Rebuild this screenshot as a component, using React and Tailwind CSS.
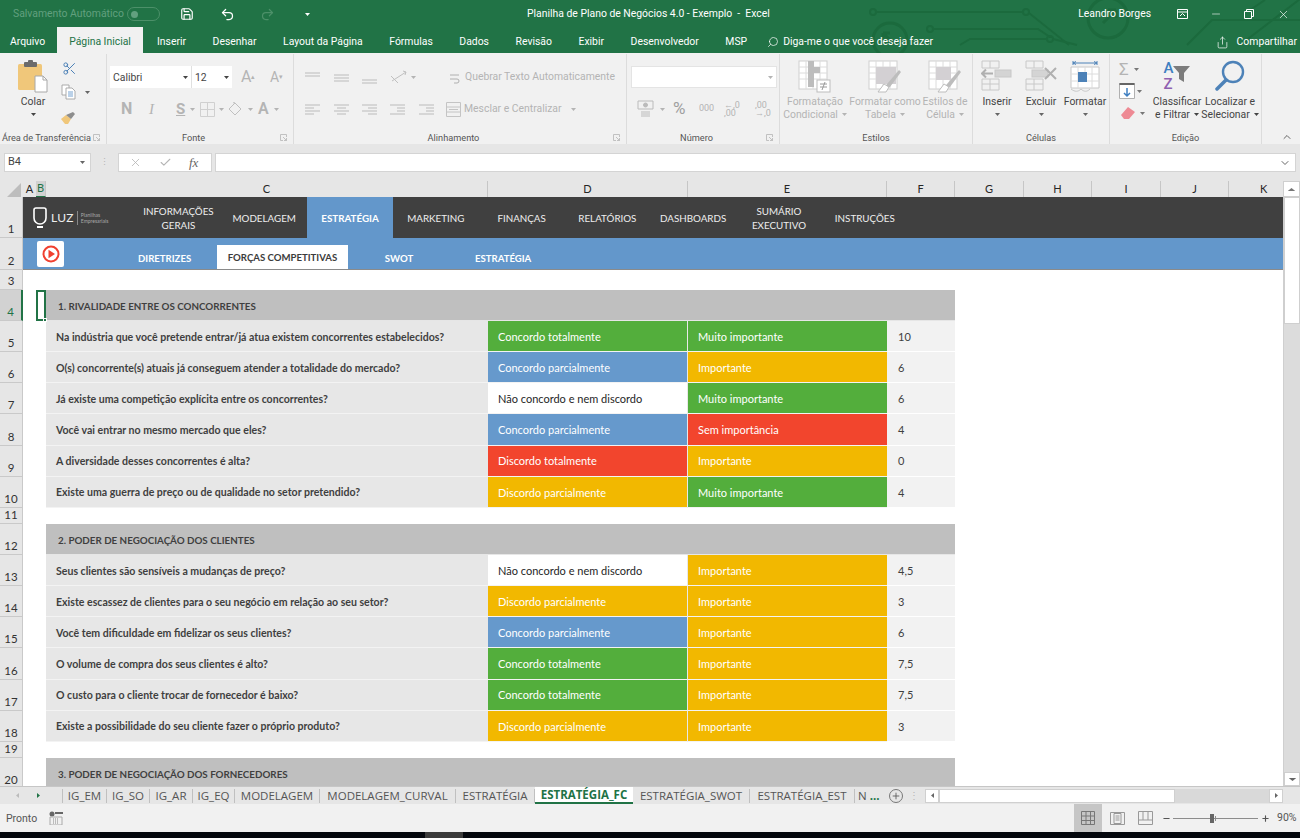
import {
  Save, Undo2, Redo2, Scissors, Search, Share, Minus, Plus, X, Check, ChevronDown, ChevronUp,
} from "lucide-react";

const GREEN = "bg-[#53ae3c] text-white";
const BLUE = "bg-[#6699cc] text-white";
const YELLOW = "bg-[#f2b800] text-white";
const RED = "bg-[#f2452d] text-white";
const WHITE = "bg-white text-[#262626]";

const agree = {
  t: ["Concordo totalmente", GREEN],
  p: ["Concordo parcialmente", BLUE],
  n: ["Não concordo e nem discordo", WHITE],
  d: ["Discordo totalmente", RED],
  q: ["Discordo parcialmente", YELLOW],
};
const weight = {
  m: ["Muito importante", GREEN],
  i: ["Importante", YELLOW],
  s: ["Sem importância", RED],
};

const sheet = [
  { n: 3, h: 20 },
  { n: 4, h: 31, title: "1. RIVALIDADE ENTRE OS CONCORRENTES", selected: true },
  { n: 5, q: "Na indústria que você pretende entrar/já atua existem concorrentes estabelecidos?", a: "t", b: "m", v: "10" },
  { n: 6, q: "O(s) concorrente(s) atuais já conseguem atender a totalidade do mercado?", a: "p", b: "i", v: "6" },
  { n: 7, q: "Já existe uma competição explícita entre os concorrentes?", a: "n", b: "m", v: "6" },
  { n: 8, q: "Você vai entrar no mesmo mercado que eles?", a: "p", b: "s", v: "4" },
  { n: 9, q: "A diversidade desses concorrentes é alta?", a: "d", b: "i", v: "0" },
  { n: 10, q: "Existe uma guerra de preço ou de qualidade no setor pretendido?", a: "q", b: "m", v: "4" },
  { n: 11, h: 16 },
  { n: 12, h: 31, title: "2. PODER DE NEGOCIAÇÃO DOS CLIENTES" },
  { n: 13, q: "Seus clientes são sensíveis a mudanças de preço?", a: "n", b: "i", v: "4,5" },
  { n: 14, q: "Existe escassez de clientes para o seu negócio em relação ao seu setor?", a: "q", b: "i", v: "3" },
  { n: 15, q: "Você tem dificuldade em fidelizar os seus clientes?", a: "p", b: "i", v: "6" },
  { n: 16, q: "O volume de compra dos seus clientes é alto?", a: "t", b: "i", v: "7,5" },
  { n: 17, q: "O custo para o cliente trocar de fornecedor é baixo?", a: "t", b: "i", v: "7,5" },
  { n: 18, q: "Existe a possibilidade do seu cliente fazer o próprio produto?", a: "q", b: "i", v: "3" },
  { n: 19, h: 16 },
  { n: 20, h: 31, title: "3. PODER DE NEGOCIAÇÃO DOS FORNECEDORES" },
];

const ribbonTabs = ["Inserir", "Desenhar", "Layout da Página", "Fórmulas", "Dados", "Revisão", "Exibir", "Desenvolvedor", "MSP"];
const navItems = [
  ["INFORMAÇÕES", "GERAIS"], ["MODELAGEM"], ["ESTRATÉGIA"], ["MARKETING"], ["FINANÇAS"],
  ["RELATÓRIOS"], ["DASHBOARDS"], ["SUMÁRIO", "EXECUTIVO"], ["INSTRUÇÕES"],
];
const sheetTabs = [
  ["IG_EM", 44], ["IG_SO", 43], ["IG_AR", 43], ["IG_EQ", 42], ["MODELAGEM", 85], ["MODELAGEM_CURVAL", 136], ["ESTRATÉGIA", 79],
];
const columns = [["G", 69], ["H", 68], ["I", 69], ["J", 68]];

function Caret({ className = "" }) {
  return (
    <svg width="5" height="3" viewBox="0 0 5 3" className={className}>
      <path d="M0 0h5L2.5 3z" fill="currentColor" />
    </svg>
  );
}

function Launcher() {
  return (
    <svg width="7" height="7" viewBox="0 0 7 7" fill="none" stroke="#b5b5b5" strokeWidth="0.8">
      <path d="M6.5 3V.5H.5v6H3M3 3l3.5 3.5M6.5 4v2.5H4" />
    </svg>
  );
}

function Lines({ y = 0, w = 15, rows, color = "#c4c4c4" }) {
  return (
    <svg width={w} height="16" viewBox={`0 0 ${w} 16`} stroke={color} strokeWidth="1.2">
      {rows.map((r, i) => (
        <path key={i} d={`M${r[0]} ${y + i * 3}H${r[1]}`} />
      ))}
    </svg>
  );
}

function Paste() {
  return (
    <svg width="30" height="33" viewBox="0 0 30 33">
      <rect x="0" y="4" width="24" height="26" rx="1.5" fill="#f0c77a" />
      <rect x="6" y="2" width="13" height="5" rx="1" fill="#6b6b6b" />
      <rect x="10" y="0" width="5" height="4" rx="1" fill="#6b6b6b" />
      <path d="M17 16h8l4 4v12H17z" fill="#fff" stroke="#a8a8a8" />
      <path d="M25 16v4h4" fill="none" stroke="#a8a8a8" />
    </svg>
  );
}

function CopyIcon() {
  return (
    <svg width="15" height="16" viewBox="0 0 15 16" fill="#fff" stroke="#a3a3a3" strokeWidth="0.9">
      <path d="M1 1h7v10H1z" />
      <path d="M5 4h6l3 3v8H5z" />
      <path d="M7 8h5M7 10h5M7 12h5" stroke="#6699cc" />
    </svg>
  );
}

function Brush() {
  return (
    <svg width="16" height="13" viewBox="0 0 16 13">
      <path d="M0 8l5-4 5 4-3 5H4z" fill="#f0c77a" />
      <path d="M5 4l7-3 2 2-4 5z" fill="#8d8d8d" />
    </svg>
  );
}

function BigStyleIcon({ kind }) {
  return (
    <svg width="34" height="33" viewBox="0 0 34 33">
      <rect x="1" y="1" width="28" height="28" fill="#fff" stroke="#cfcfcf" />
      <path d="M1 7h28M1 13h28M1 19h28M8 1v28M15 1v28M22 1v28" stroke="#dcdcdc" fill="none" />
      {kind === "cond" && <path d="M10 1h6v26h-6zM16 7h6v6h-6z" fill="#bdbdbd" />}
      {kind === "cond" && (
        <>
          <rect x="19" y="20" width="13" height="12" fill="#fff" stroke="#bdbdbd" />
          <path d="M22 24h7M22 27h7M27 22l-3 8" stroke="#9a9a9a" fill="none" />
        </>
      )}
      {kind === "table" && (
        <>
          <path d="M8 7h20v17H8z" fill="#d3d0d3" />
          <path d="M14 30l5-6 12-14 2 2-11 15z" fill="#bdbdbd" />
          <path d="M10 32l6-8 5 3-3 5z" fill="#fff" stroke="#bdbdbd" />
        </>
      )}
      {kind === "cell" && (
        <>
          <path d="M8 7h15v13H8z" fill="#d3d0d3" />
          <path d="M14 30l5-6 12-14 2 2-11 15z" fill="#bdbdbd" />
          <path d="M10 32l6-8 5 3-3 5z" fill="#fff" stroke="#bdbdbd" />
        </>
      )}
    </svg>
  );
}

function CellIcon({ kind }) {
  if (kind === "format") {
    return (
      <svg width="30" height="33" viewBox="0 0 30 33" fill="none">
        <path d="M3 3h24" stroke="#4d82b8" />
        <path d="M3 1v4M27 1v4M6 1.5L3 3l3 1.5M24 1.5L27 3l-3 1.5" stroke="#4d82b8" fill="none" />
        <path d="M1 7h28v21H1z" fill="#fff" stroke="#c8c8c8" />
        <path d="M1 14h28M1 21h28M8 7v21M22 7v21M15 7v7" stroke="#dcdcdc" />
        <rect x="8" y="12" width="9" height="10" fill="#4d82b8" />
        <path d="M1 29c4 3 7 3 10 0 3 3 6 3 9 0" stroke="#c8c8c8" />
      </svg>
    );
  }
  const del = kind === "delete";
  return (
    <svg width="32" height="32" viewBox="0 0 32 32" fill="none" stroke="#c8c8c8">
      <path d="M1 1h17v7H1zM9 1v7M1 19h17v11H1zM1 24h17M9 19v11" />
      <rect x={del ? 7 : 14} y="10" width="16" height="7" fill="#d4d4d4" />
      {del ? (
        <path d="M20 8l11 11M31 8L20 19" stroke="#b0b0b0" strokeWidth="2" />
      ) : (
        <path d="M12 13.5H1M5 9.5l-4 4 4 4" stroke="#b0b0b0" strokeWidth="2" />
      )}
    </svg>
  );
}

function SortIcon() {
  return (
    <svg width="17" height="17" viewBox="0 0 17 17" className="mt-[6px]">
      <path d="M0 0h17l-6 7v9l-5-3V7z" fill="#7c7c7c" />
    </svg>
  );
}

function LargeButton({ lines, caret, disabled, w, children }) {
  return (
    <div className={`flex flex-col items-center ${w} ${disabled ? "text-[#b4b4b4]" : "text-[#444]"}`}>
      <div className="h-[35px] flex items-start justify-center">{children}</div>
      {lines.map((l, i) => (
        <div key={l} className="leading-[13px] whitespace-nowrap flex items-center gap-1">
          {l}
          {caret && i === lines.length - 1 && <Caret />}
        </div>
      ))}
    </div>
  );
}

function RibbonGroup({ w, label, launcher, children }) {
  return (
    <div className={`${w} h-[90px] mt-px border-r border-[#dcdcdc] flex flex-col shrink-0`}>
      <div className="h-[77px]">{children}</div>
      <div className={`relative h-[13px] text-center text-[9.2px] leading-[13px] text-[#555] whitespace-nowrap ${launcher ? "pr-[13px]" : ""}`}>
        {label}
        {launcher && (
          <span className="absolute right-[6px] top-[3px]">
            <Launcher />
          </span>
        )}
      </div>
    </div>
  );
}

function Ribbon() {
  return (
    <div className="h-[91px] bg-[#f1f1f1] flex text-[10.4px] font-['Roboto',sans-serif] shrink-0">
      <RibbonGroup w="w-[107px]" label="Área de Transferência" launcher>
        <div className="flex pt-[6px]">
          <div className="w-[54px] pl-[11px] text-[#444]">
            <div className="w-[44px] flex flex-col items-center">
              <div className="h-[35px]"><Paste /></div>
              <div className="leading-[13px]">Colar</div>
              <Caret className="mt-[5px]" />
            </div>
          </div>
          <div className="flex flex-col items-start pl-[7px] pt-[1px]">
            <Scissors size={15} className="text-[#4d82b8] ml-[1px]" strokeWidth={1.6} />
            <div className="flex items-center gap-[9px] text-[#666] mt-[8px]"><CopyIcon /><Caret /></div>
            <div className="mt-[11px]"><Brush /></div>
          </div>
        </div>
      </RibbonGroup>

      <RibbonGroup w="w-[187px]" label="Fonte" launcher>
        <div className="pt-[12px] pl-[3px]">
          <div className="flex items-center">
            <div className="w-[82px] h-[22px] pt-px bg-white border-r border-[#e0e0e0] flex items-center justify-between px-[3px] text-[#444]">
              Calibri <Caret />
            </div>
            <div className="w-[40px] h-[22px] pt-px bg-white flex items-center justify-between px-[3px] text-[#444]">
              12 <Caret />
            </div>
            <div className="ml-[9px] w-[29px] text-[16px] leading-none text-[#b4b4b4]">A<sup className="text-[7px]">▴</sup></div>
            <div className="text-[14px] leading-none text-[#b4b4b4]">A<sup className="text-[7px]">▾</sup></div>
          </div>
          <div className="flex items-center text-[#b4b4b4] pt-[10px] pl-[11px] h-[32px]">
            <span className="w-[28px] text-[16px] font-bold">N</span>
            <span className="w-[27px] text-[15px] italic font-['Liberation_Serif',serif]">I</span>
            <span className="w-[14px] text-[15px] font-bold underline">S</span>
            <Caret className="mr-[5px]" />
            <svg width="15" height="15" viewBox="0 0 15 15" fill="none" stroke="#d0d0d0"><path d="M.5.5h14v14H.5zM7.5.5v14M.5 7.5h14" /></svg>
            <Caret className="mx-[4px]" />
            <svg width="16" height="14" viewBox="0 0 16 14" fill="none" stroke="#c0c0c0"><path d="M1 7l6-6 6 6-6 6zM5 1l2-1" /></svg>
            <Caret className="mx-[4px]" />
            <span className="text-[16px] font-semibold pl-[1px]">A</span>
            <Caret className="ml-[5px]" />
          </div>
        </div>
      </RibbonGroup>

      <RibbonGroup w="w-[333px]" label="Alinhamento" launcher>
        <div className="pt-[12px] pl-[11px] text-[#b4b4b4]">
          <div className="flex items-center h-[22px]">
            <div className="w-[29px]"><Lines rows={[[0, 15], [0, 15]]} y={4} /></div>
            <div className="w-[28px]"><Lines rows={[[0, 15], [0, 15], [0, 15]]} y={6} /></div>
            <div className="w-[28px]"><Lines rows={[[0, 15], [0, 15]]} y={11} /></div>
            <svg width="20" height="16" viewBox="0 0 20 16" fill="none" stroke="#c0c0c0"><path d="M2 12L16 3M13 2l3 1-1 3M1 7l7 7" /></svg>
            <Caret className="ml-[1px]" />
            <svg width="13" height="14" viewBox="0 0 13 14" fill="none" stroke="#b0b0b0" className="ml-[33px] mr-[3px]"><path d="M1 9h7a2 2 0 010 4H5M1 5h9" /></svg>
            <span className="whitespace-nowrap">Quebrar Texto Automaticamente</span>
          </div>
          <div className="flex items-center h-[22px] mt-[10px]">
            <div className="w-[29px]"><Lines rows={[[0, 15], [0, 9], [0, 15], [0, 9]]} y={4} /></div>
            <div className="w-[28px]"><Lines rows={[[0, 15], [3, 12], [0, 15], [3, 12]]} y={4} /></div>
            <div className="w-[28px]"><Lines rows={[[0, 15], [6, 15], [0, 15], [6, 15]]} y={4} /></div>
            <div className="w-[29px]"><Lines rows={[[0, 15], [7, 15], [7, 15], [0, 15]]} y={4} /></div>
            <div className="w-[27px]"><Lines rows={[[0, 15], [7, 15], [7, 15], [0, 15]]} y={4} /></div>
            <svg width="15" height="15" viewBox="0 0 15 15" fill="none" stroke="#c4c4c4" className="mr-[3px]"><path d="M.5.5h14v14H.5zM.5 5h14M.5 10h14M3 7.5h9" /></svg>
            <span className="whitespace-nowrap">Mesclar e Centralizar</span>
            <Caret className="ml-[9px]" />
          </div>
        </div>
      </RibbonGroup>

      <RibbonGroup w="w-[153px]" label="Número" launcher>
        <div className="pt-[12px] pl-[4px] text-[#b4b4b4]">
          <div className="w-[146px] h-[22px] bg-white border border-[#e4e4e4] flex items-center justify-end pr-[3px]"><Caret /></div>
          <div className="flex items-center h-[32px] pt-[10px] pl-[5px]">
            <svg width="22" height="18" viewBox="0 0 22 18" fill="none" stroke="#bbb" className="mr-[2px]"><path d="M2 1h15v8H2z" /><circle cx="9.5" cy="5" r="2" fill="#bbb" /><path d="M5 12h9M5 14h9M5 16h9" /></svg>
            <Caret className="mr-[8px]" />
            <span className="w-[26px] text-[17px] text-[#9f9f9f]">%</span>
            <span className="w-[25px] text-[9px]">000</span>
            <div className="w-[31px] text-[9px] leading-[8px] flex flex-col whitespace-nowrap">
              <span>←,0</span>
              <span>,00</span>
            </div>
            <div className="text-[9px] leading-[8px] flex flex-col whitespace-nowrap">
              <span>,00</span>
              <span>→,0</span>
            </div>
          </div>
        </div>
      </RibbonGroup>

      <RibbonGroup w="w-[193px]" label="Estilos">
        <div className="flex pt-[6px]">
          <LargeButton lines={["Formatação", "Condicional"]} caret disabled w="w-[70px]"><BigStyleIcon kind="cond" /></LargeButton>
          <LargeButton lines={["Formatar como", "Tabela"]} caret disabled w="w-[70px]"><BigStyleIcon kind="table" /></LargeButton>
          <LargeButton lines={["Estilos de", "Célula"]} caret disabled w="w-[50px]"><BigStyleIcon kind="cell" /></LargeButton>
        </div>
      </RibbonGroup>

      <RibbonGroup w="w-[137px]" label="Células">
        <div className="flex pt-[6px] pl-[2px]">
          <LargeButton lines={["Inserir"]} w="w-[44px]"><CellIcon kind="insert" /></LargeButton>
          <LargeButton lines={["Excluir"]} w="w-[44px]"><CellIcon kind="delete" /></LargeButton>
          <LargeButton lines={["Formatar"]} w="w-[44px]"><CellIcon kind="format" /></LargeButton>
        </div>
        <div className="flex pl-[2px] text-[#666] mt-[5px]">
          <div className="w-[44px] flex justify-center"><Caret /></div>
          <div className="w-[44px] flex justify-center"><Caret /></div>
          <div className="w-[44px] flex justify-center"><Caret /></div>
        </div>
      </RibbonGroup>

      <RibbonGroup w="w-[152px]" label="Edição">
        <div className="flex pt-[6px] text-[#444]">
          <div className="w-[40px] pl-[9px] flex flex-col gap-[4px] text-[#777]">
            <div className="flex items-center gap-[5px] h-[18px]"><span className="text-[#b4b4b4] text-[17px] leading-none">Σ</span><Caret /></div>
            <div className="flex items-center gap-[2px] h-[18px]">
              <svg width="16" height="16" viewBox="0 0 16 16" fill="#fff" stroke="#b0b0b0"><path d="M.5.5h15v15H.5z" /><path d="M.5 1h15" stroke="#666" strokeWidth="2" /><path d="M8 5v8M5 10l3 3 3-3" stroke="#3f7fc1" strokeWidth="1.5" fill="none" /></svg>
              <Caret />
            </div>
            <div className="flex items-center gap-[5px] h-[18px] pl-[2px]">
              <svg width="14" height="12" viewBox="0 0 14 12"><path d="M0 8l7-8 7 5-6 7H3z" fill="#ee8a94" /></svg>
              <Caret />
            </div>
          </div>
          <LargeButton lines={["Classificar", "e Filtrar"]} caret w="w-[54px]">
            <div className="flex">
              <div className="text-[15px] leading-[16px] font-medium">
                <div className="text-[#3f7fc1]">A</div>
                <div className="text-[#8f60b0]">Z</div>
              </div>
              <SortIcon />
            </div>
          </LargeButton>
          <LargeButton lines={["Localizar e", "Selecionar"]} caret w="w-[52px]">
            <svg width="30" height="32" viewBox="0 0 30 32" fill="none" stroke="#4d82b8" strokeLinecap="round">
              <circle cx="18" cy="12" r="10" strokeWidth="2.4" />
              <path d="M11 20L2 29" strokeWidth="3.5" />
            </svg>
          </LargeButton>
        </div>
      </RibbonGroup>

      <div className="flex-1 flex items-end justify-end pr-[7px] pb-[1px]">
        <ChevronUp size={12} className="text-[#666]" strokeWidth={2} />
      </div>
    </div>
  );
}

function TitleBar() {
  return (
    <div className="relative h-[53px] bg-[#217346] text-white shrink-0 font-['Roboto',sans-serif]">
      <svg className="absolute left-0 top-0" width="1300" height="53" viewBox="0 0 1300 53" fill="none" stroke="#1b6a3d" strokeWidth="2">
        <circle cx="873" cy="12" r="3" />
        <path d="M876 12h146" />
        <circle cx="1026" cy="12" r="3" />
        <path d="M1029 13l40 32" />
        <circle cx="930" cy="29" r="3" />
        <path d="M933 29h105l12 8h2" />
        <circle cx="1050" cy="39" r="3" />
        <path d="M960 45l10-6h76M1053 39l24 6" />
        <circle cx="890" cy="40" r="17" strokeWidth="3" />
        <path d="M883 33l11 11M883 33h7M883 33v7" strokeWidth="3" />
        <circle cx="1108" cy="18" r="20" strokeWidth="3" />
        <path d="M1116 10l-13 13M1116 10h-8M1116 10v8" strokeWidth="3" />
        <path d="M1187 45l25-25h88M1240 45l60-46M1265 0l-15 10" />
      </svg>

      <div className="relative h-[27px] pt-px flex items-center text-[10.4px]">
        <span className="ml-[13px] w-[110px] text-[#62a07f] whitespace-nowrap">Salvamento Automático</span>
        <div className="ml-[4px] w-[33px] h-[14px] rounded-full border border-[#4c9069] flex items-center pl-[3px]">
          <div className="w-[7px] h-[7px] rounded-full bg-[#62a07f]" />
        </div>
        <Save size={14} className="ml-[20px]" strokeWidth={2} />
        <Undo2 size={15} className="ml-[26px]" strokeWidth={2} />
        <Redo2 size={15} className="ml-[25px] text-[#4c9069]" strokeWidth={2} />
        <Caret className="ml-[30px]" />
        <span className="ml-[217px] whitespace-pre">Planilha de Plano de Negócios 4.0 - Exemplo  -  Excel</span>
        <span className="ml-auto whitespace-nowrap">Leandro Borges</span>
        <svg width="11" height="10" viewBox="0 0 11 10" fill="none" stroke="#fff" className="ml-[26px]"><path d="M.5.5h10v9H.5zM.5 3h10" /><path d="M3 7l2.500-2.500L8 7" /></svg>
        <Minus size={12} className="ml-[22px]" strokeWidth={1.2} />
        <svg width="10" height="10" viewBox="0 0 10 10" fill="none" stroke="#fff" className="ml-[22px]"><path d="M.5 2.500h7v7h-7zM2.500 2.500v-2h7v7h-2" /></svg>
        <X size={13} className="ml-[23px] mr-[10px]" strokeWidth={1.2} />
      </div>

      <div className="relative h-[26px] flex items-end text-[10.4px]">
        <span className="ml-[10px] w-[47px] mb-[3px]">Arquivo</span>
        <span className="w-[86px] h-[26px] bg-[#f1f1f1] text-[#217346] flex items-center justify-center pt-[3px]">Página Inicial</span>
        <div className="flex gap-[26.6px] ml-[14px] mb-[3px]">
          {ribbonTabs.map((t) => (
            <span key={t} className="whitespace-nowrap">{t}</span>
          ))}
        </div>
        <div className="flex items-center mb-[3px] ml-[20px] gap-[4px]">
          <Search size={12} className="-scale-x-100" strokeWidth={1.4} />
          <span className="whitespace-nowrap">Diga-me o que você deseja fazer</span>
        </div>
        <div className="flex items-center mb-[3px] ml-auto mr-[3px] gap-[8px]">
          <Share size={13} strokeWidth={1.3} />
          <span>Compartilhar</span>
        </div>
      </div>
    </div>
  );
}

function FormulaBar() {
  return (
    <div className="h-[37px] bg-[#e6e6e6] shrink-0 pt-[9px] flex items-start font-['Roboto',sans-serif]">
      <div className="ml-[4px] w-[87px] h-[19px] bg-white border border-[#d4d4d4] flex items-center justify-between px-[3px] text-[11px] text-[#444]">
        B4 <Caret className="text-[#666] mr-[2px]" />
      </div>
      <div className="w-[27px] h-[19px] flex justify-center items-center text-[#b5b5b5] text-[9px] tracking-tighter">⋮</div>
      <div className="w-[94px] h-[19px] bg-white border border-[#d4d4d4] flex items-center pl-[10px] gap-[17px] text-[#b5b5b5]">
        <X size={13} strokeWidth={1.5} />
        <Check size={13} strokeWidth={2} />
        <span className="font-['Liberation_Serif',serif] italic text-[13px] leading-none text-[#666]">fx</span>
      </div>
      <div className="ml-[3px] w-[1081px] h-[19px] bg-white border border-[#d4d4d4] flex items-center justify-end pr-[4px]">
        <ChevronDown size={12} className="text-[#666]" strokeWidth={2} />
      </div>
    </div>
  );
}

function ColHead({ w, label, active }) {
  return (
    <div className={`${w} h-[16px] shrink-0 border-r border-[#c6c6c6] flex items-center justify-center ${active ? "bg-[#d2d2d2] text-[#217346] border-b border-b-[#217346]" : "text-[#262626]"}`}>
      {label}
    </div>
  );
}

function ColumnHeader() {
  return (
    <div className="h-[16px] bg-[#e6e6e6] flex items-end text-[11px] font-['Lato',sans-serif] shrink-0">
      <div className="w-[23px] h-[16px] shrink-0 flex items-end justify-end pr-[1px] border-r border-[#e6e6e6]">
        <svg width="14" height="14" viewBox="0 0 14 14"><path d="M14 0v14H0z" fill="#bdbdbd" /></svg>
      </div>
      <div className="w-[13px] text-center text-[#262626]">A</div>
      <ColHead w="w-[10px]" label="B" active />
      <ColHead w="w-[442px]" label="C" />
      <ColHead w="w-[200px]" label="D" />
      <ColHead w="w-[199px]" label="E" />
      <ColHead w="w-[68px]" label="F" />
      {columns.map(([c, w]) => (
        <div key={c} style={{ width: w }} className="h-[16px] shrink-0 border-r border-[#c6c6c6] flex items-center justify-center text-[#262626]">{c}</div>
      ))}
      <div className="w-[54px] h-[16px] shrink-0 pl-[31px] flex items-center text-[#262626]">K</div>
      <div className="flex-1 h-[16px] bg-white border border-[#cfcfcf] flex items-center justify-center text-[#777]">
        <Caret className="scale-y-[-1] scale-x-150" />
      </div>
    </div>
  );
}

function RowHead({ n, selected }) {
  return (
    <div className={`w-[23px] shrink-0 flex items-end justify-center pb-[1px] border-b border-[#c9c9c9] text-[11.5px] leading-[14px] ${selected ? "bg-[#d2d2d2] text-[#217346] border-r-2 border-r-[#217346]" : "bg-[#e6e6e6] text-[#333] border-r border-r-[#c9c9c9]"}`}>
      {n}
    </div>
  );
}

function SheetRow({ row }) {
  const height = row.h || 31.17;
  const cellBase = "h-full flex items-center pt-[2px] border-b border-[#f3f3f3]";

  let content = null;
  if (row.title) {
    content = (
      <div className="flex h-full w-[909px] items-center pt-[2px] bg-[#bfbfbf] pl-[12px] border-b border-[#e6e6e6] font-bold text-[9.8px] text-[#3f3f3f] whitespace-nowrap">
        {row.title}
      </div>
    );
  } else if (row.q) {
    const [aText, aClass] = agree[row.a];
    const [bText, bClass] = weight[row.b];
    content = (
      <div className="flex h-full">
        <div className={`h-full flex items-center pt-[3px] border-b border-[#f3f3f3] w-[442px] bg-[#e7e7e7] pl-[10px] font-bold text-[10.57px] text-[#3f3f3f] whitespace-nowrap`}>{row.q}</div>
        <div className={`${cellBase} w-[200px] pl-[10px] border-r border-r-[#e8e8e8] ${aClass}`}>{aText}</div>
        <div className={`${cellBase} w-[199px] pl-[10px] ${bClass}`}>{bText}</div>
        <div className={`${cellBase} w-[68px] bg-[#f2f2f2] pl-[11px] text-[#3f3f3f] border-b-[#fff]`}>{row.v}</div>
      </div>
    );
  }

  return (
    <div style={{ height }} className="flex shrink-0 text-[11px] font-['Lato',sans-serif]">
      <RowHead n={row.n} selected={row.selected} />
      <div className="w-[13px] shrink-0" />
      <div className={`relative w-[10px] shrink-0 ${row.selected ? "border-2 border-[#217346]" : ""}`}>
        {row.selected && <span className="absolute right-[-3px] bottom-[-3px] w-[4px] h-[4px] bg-[#217346] border border-white" />}
      </div>
      {content}
    </div>
  );
}

function Worksheet() {
  return (
    <div className="flex flex-1 min-h-0">
      <div className="w-[1283px] shrink-0 overflow-hidden flex flex-col bg-white">
        <div className="h-[41px] flex shrink-0 text-[11px] font-['Lato',sans-serif]">
          <RowHead n={1} />
          <div className="flex-1 bg-[#404040] flex text-[#eeeeee] text-[9.8px] leading-[14px]">
            <div className="w-[112.5px] flex items-center pl-[10px] gap-[3px] shrink-0">
              <svg width="14" height="22" viewBox="0 0 14 22" fill="none" stroke="#fff" strokeWidth="1.6">
                <path d="M3 1h8a2 2 0 012 2v8a6 6 0 01-12 0V3a2 2 0 012-2z" />
                <path d="M4 20h6" strokeWidth="2" />
              </svg>
              <span className="text-[12px] leading-none ml-[1px] tracking-[0.3px]">LUZ</span>
              <div className="w-px h-[14px] bg-[#888]" />
              <span className="text-[5px] leading-[6px] text-[#aaa]">Planilhas<br />Empresariais</span>
            </div>
            {navItems.map((lines) => {
              const active = lines[0] === "ESTRATÉGIA";
              return (
                <div key={lines[0]} className={`w-[85.8px] shrink-0 flex flex-col items-center justify-center text-center ${active ? "bg-[#6397cb] font-bold text-white" : ""}`}>
                  {lines.map((l) => (
                    <div key={l}>{l}</div>
                  ))}
                </div>
              );
            })}
          </div>
        </div>

        <div className="h-[32px] flex shrink-0 text-[11px] font-['Lato',sans-serif]">
          <RowHead n={2} />
          <div className="flex-1 bg-[#6397cb] flex border-b border-[#8a8a8a] text-white text-[9.6px] font-bold">
            <div className="ml-[14px] mt-[3px] w-[27px] h-[26px] bg-white rounded-[2px] flex items-center justify-center">
              <svg width="18" height="18" viewBox="0 0 18 18" fill="none">
                <circle cx="9" cy="9" r="7.5" stroke="#f04030" strokeWidth="2" />
                <path d="M6.500 4.800L13 9l-6.500 4.200z" fill="#f04030" />
              </svg>
            </div>
            <div className="ml-[74px] pt-[11px] flex items-center w-[79px]">DIRETRIZES</div>
            <div className="mt-[7px] w-[131px] h-[24px] pt-[3px] bg-white text-[#3c3c3c] flex items-center justify-center whitespace-nowrap">FORÇAS COMPETITIVAS</div>
            <div className="pt-[11px] w-[102px] flex items-center justify-center">SWOT</div>
            <div className="pt-[11px] ml-[25px] flex items-center">ESTRATÉGIA</div>
          </div>
        </div>

        {sheet.map((row) => (
          <SheetRow key={row.n} row={row} />
        ))}
      </div>

      <div className="flex-1 flex flex-col bg-[#dcdcdc] border-l border-[#cfcfcf]">
        <div className="h-[127px] bg-white border border-[#cfcfcf]" />
        <div className="flex-1" />
        <div className="h-[14px] bg-white border border-[#cfcfcf] flex items-center justify-center text-[#666]">
          <Caret className="scale-x-150" />
        </div>
      </div>
    </div>
  );
}

function TabsBar() {
  return (
    <div className="h-[18px] bg-[#e6e6e6] border-t border-[#c6c6c6] flex items-center shrink-0 text-[11.5px] text-[#555] font-['Open_Sans',sans-serif]">
      <div className="w-[63px] shrink-0 flex items-center pl-[15px] gap-[16px] border-r border-[#c0c0c0] h-[14px]">
        <Caret className="rotate-90 text-[#bbb]" />
        <Caret className="-rotate-90 text-[#217346]" />
      </div>
      {sheetTabs.map(([name, w]) => (
        <div key={name} style={{ width: w }} className="shrink-0 h-[14px] flex items-center justify-center whitespace-nowrap border-r border-[#c0c0c0]">
          {name}
        </div>
      ))}
      <div className="w-[98px] h-[17px] shrink-0 bg-white border-b-2 border-[#217346] text-[#217346] font-bold flex items-center justify-center whitespace-nowrap">ESTRATÉGIA_FC</div>
      <div className="w-[117px] h-[14px] shrink-0 flex items-center justify-center whitespace-nowrap border-r border-[#c0c0c0]">ESTRATÉGIA_SWOT</div>
      <div className="w-[105px] h-[14px] shrink-0 flex items-center justify-center whitespace-nowrap border-r border-[#c0c0c0]">ESTRATÉGIA_EST</div>
      <div className="w-[34px] shrink-0 flex items-center pl-[3px] gap-[3px]">
        <span>N</span><span className="text-[#217346] font-bold leading-none">...</span>
      </div>
      <div className="w-[14px] h-[14px] rounded-full border border-[#777] flex items-center justify-center">
        <Plus size={10} className="text-[#555]" strokeWidth={2} />
      </div>
      <span className="w-[22px] text-center text-[#b5b5b5] text-[10px]">⋮</span>
      <div className="w-[358px] h-[14px] flex bg-[#d9d9d9]">
        <div className="w-[14px] bg-white border border-[#d0d0d0] flex items-center justify-center"><Caret className="rotate-90 text-[#666]" /></div>
        <div className="w-[236px] bg-white border border-[#d0d0d0]" />
        <div className="flex-1" />
        <div className="w-[14px] bg-white border border-[#d0d0d0] flex items-center justify-center"><Caret className="-rotate-90 text-[#666]" /></div>
      </div>
    </div>
  );
}

function StatusBar() {
  return (
    <div className="h-[28px] bg-[#f1f1f1] flex items-center shrink-0 text-[10.5px] text-[#555] font-['Roboto',sans-serif]">
      <span className="ml-[6px] w-[28px] pt-[2px]">Pronto</span>
      <svg width="14" height="14" viewBox="0 0 14 14" className="ml-[15px]" fill="none">
        <circle cx="3" cy="3" r="2.500" fill="#666" />
        <path d="M6 2h8" stroke="#666" strokeWidth="2" />
        <path d="M1 6h12v8H1z" stroke="#aaa" />
        <path d="M4 8h6M4 10h6M4 12h6" stroke="#888" strokeDasharray="1 1" />
      </svg>
      <div className="ml-auto w-[28px] h-[28px] bg-[#c6c6c6] flex items-center justify-center">
        <svg width="14" height="14" viewBox="0 0 14 14" fill="none" stroke="#777"><path d="M.5.5h13v13H.5zM.5 5h13M.5 9.500h13M5 .5v13M9.500 .5v13" /></svg>
      </div>
      <div className="w-[30px] flex justify-center">
        <svg width="15" height="13" viewBox="0 0 15 13" fill="none" stroke="#999"><path d="M.5.5h14v12H.5z" /><path d="M4 1.500h7v10H4zM5.500 4h4M5.500 6h4M5.500 8h4" /></svg>
      </div>
      <div className="w-[26px] flex justify-center">
        <svg width="15" height="14" viewBox="0 0 15 14" fill="none" stroke="#999"><path d="M.5.5h14v13H.5zM.5 9h14M5 .5V9M10 .5V9" /></svg>
      </div>
      <Minus size={9} className="ml-[4px] text-[#555]" strokeWidth={3} />
      <div className="relative ml-[2px] w-[85px] h-px bg-[#8c8c8c]">
        <span className="absolute left-[37px] -top-[4px] w-[4px] h-[9px] bg-[#666]" />
        <span className="absolute left-[42px] -top-[2px] w-px h-[5px] bg-[#8c8c8c]" />
      </div>
      <Plus size={9} className="ml-[3px] text-[#555]" strokeWidth={3} />
      <span className="ml-[7px] w-[17px] mr-[6px] whitespace-nowrap">90%</span>
    </div>
  );
}

export default function App() {
  return (
    <div className="w-[1300px] h-[838px] overflow-hidden flex flex-col bg-[#e6e6e6]">
      <TitleBar />
      <Ribbon />
      <FormulaBar />
      <ColumnHeader />
      <Worksheet />
      <TabsBar />
      <StatusBar />
      <div className="h-[6px] bg-[#04070d] shrink-0 flex">
        <div className="ml-[425px] w-[38px] bg-[#3b3b3b]" />
      </div>
    </div>
  );
}
